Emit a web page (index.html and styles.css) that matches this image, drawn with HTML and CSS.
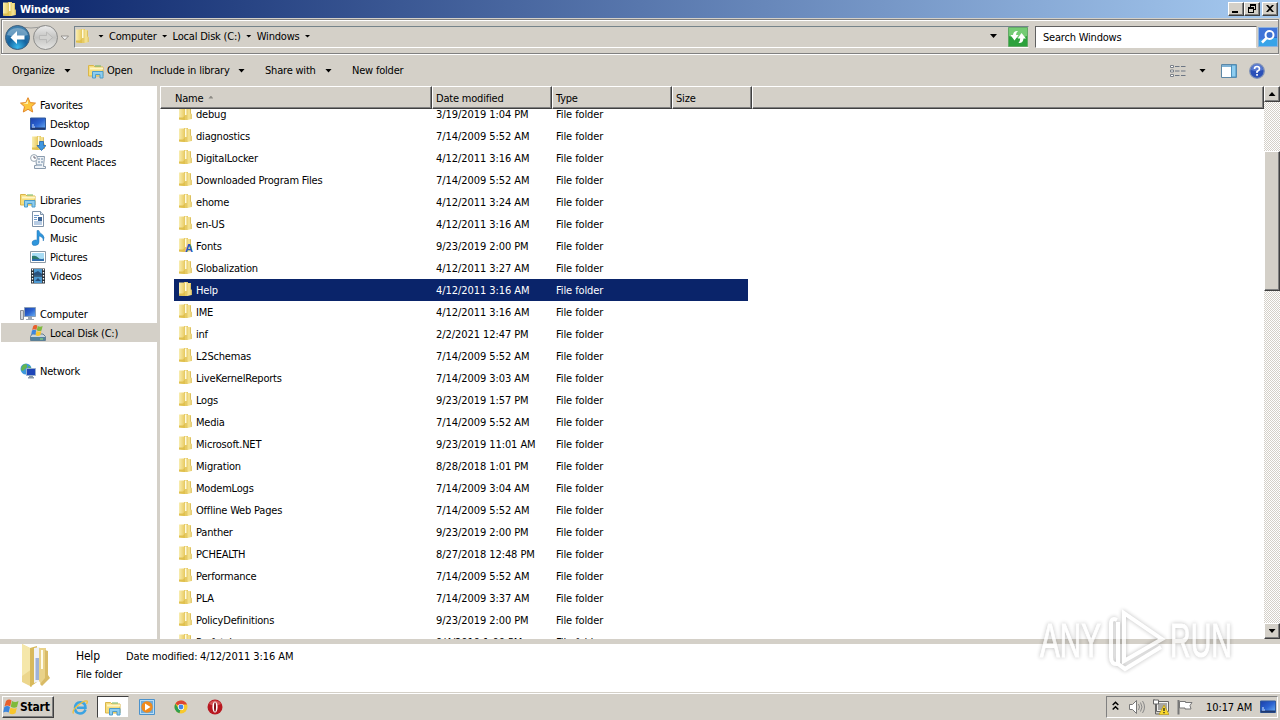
FILE: index.html
```html
<!DOCTYPE html>
<html lang="en">
<head>
    <meta charset="UTF-8">
    <meta name="viewport" content="width=device-width, initial-scale=1.0">
    <title>Windows</title>
    <link rel="stylesheet" href="styles.css">
</head>
<body>

<!-- Shared icons -->
<svg class="sprite" aria-hidden="true">
    <defs>
        <linearGradient id="gold" x1="0" x2="1" y1="0" y2="0">
            <stop offset="0" stop-color="#f8edb0"/>
            <stop offset="1" stop-color="#ecd06c"/>
        </linearGradient>
        <linearGradient id="screen" x1="0" x2="1" y1="0" y2="1">
            <stop offset="0" stop-color="#1c3fa8"/>
            <stop offset="0.5" stop-color="#2a62d0"/>
            <stop offset="1" stop-color="#6fb4f4"/>
        </linearGradient>
    </defs>
    <symbol id="folder" viewBox="0 0 16 16">
        <path d="M2 1.500h5V15l-5-.5z" fill="url(#gold)"/>
        <path d="M7 1h4v14H7z" fill="#e6cb66"/>
        <path d="M8 1.500h1.500V10H8z" fill="#fffbe0"/>
        <path d="M10.500 2H14v6l.7 1v5l-4.200 1z" fill="#f3e08e"/>
        <path d="M13.500 2.500v6l.7 1V14" fill="none" stroke="#dcc060"/>
        <path d="M2 12.500h4l2-2V15l-6-.5z" fill="#e0c04e"/>
    </symbol>
    <symbol id="library" viewBox="0 0 16 16">
        <path d="M0.5 2.500h5l1.500 1.500h8v9H.5z" fill="#f6dd7c" stroke="#dab64a"/>
        <path d="M2 5.500h13" stroke="#fff6c4" stroke-width="2"/>
        <path d="M7 3h6" stroke="#74b65a"/>
        <path d="M4.500 15V8.500h10.500V15h-3v-3.500H7.500V15z" fill="#8dcdf0" stroke="#4e9cc9"/>
    </symbol>
    <symbol id="monitor" viewBox="0 0 16 16">
        <path d="M0.500 2h15v11.500H.5z" fill="url(#screen)" stroke="#305a9c"/>
        <path d="M1 11.500h14v2H1z" fill="#20386e"/>
        <path d="M2 11h3M2 9h2" stroke="#cfe6ff"/>
    </symbol>
    <symbol id="flag" viewBox="0 0 16 16">
        <path d="M3 2q3-2.500 5.500-.5L7.200 7.300q-3-1.800-5.700 0z" fill="#e8602c"/>
        <path d="M9 2q3 2 6.500 0l-1.500 6q-3 1.800-6.300-.3z" fill="#7fba3c"/>
        <path d="M1.300 8q3-2 5.700 0l-1.300 5.500q-2.700-1.700-5.500 0z" fill="#3c86dc"/>
        <path d="M7.500 8.500q3 2 6.300.2l-1.300 5.500q-3.500 2-6.300 0z" fill="#f8c62c"/>
    </symbol>
</svg>

<div class="window">
    <div class="title-bar">
        <svg class="icon title-icon"><use href="#folder"/></svg>
        <span class="title">Windows</span>
        <div class="btn3d win-btn"><svg viewBox="0 0 12 10"><path d="M2 7h6v2H2z"/></svg></div>
        <div class="btn3d win-btn"><svg viewBox="0 0 12 10"><path d="M4 0h6v6H8V5h1V2H5v1H4zM2 3h6v6H2zm1 2v3h4V5z" fill-rule="evenodd"/></svg></div>
        <div class="btn3d win-btn close"><svg viewBox="0 0 12 10"><path d="M2 1h2l2 2 2-2h2L7 4.500 10 8H8L6 6 4 8H2l3-3.500z"/></svg></div>
    </div>

    <div class="address-bar">
        <svg class="nav-buttons" viewBox="0 0 70 28">
            <defs>
                <radialGradient id="back" cx=".5" cy=".9" r=".8">
                    <stop offset="0" stop-color="#39b8ec"/>
                    <stop offset=".5" stop-color="#14639f"/>
                    <stop offset="1" stop-color="#3d7fae"/>
                </radialGradient>
                <linearGradient id="fwd" x1="0" x2="0" y1="0" y2="1">
                    <stop offset="0" stop-color="#ececec"/>
                    <stop offset=".5" stop-color="#c4c4c2"/>
                    <stop offset="1" stop-color="#e6e6e4"/>
                </linearGradient>
            </defs>
            <path d="M16 2.500q14 5 28 0" fill="none" stroke="#9a9a98"/>
            <circle cx="16.500" cy="14.500" r="12" fill="url(#back)" stroke="#41607c"/>
            <path d="M6 12a11 10 0 0 1 21 0q-10 3-21 0z" fill="#fff" opacity=".3"/>
            <path d="M9.500 14.500 16 8v4.500h7.500v4H16V21z" fill="#fff"/>
            <circle cx="44.500" cy="14.500" r="12" fill="url(#fwd)" stroke="#8c8c8a"/>
            <path d="M51.500 14.500 45.500 9v3.500h-7v4h7V20z" fill="#d2d2d0" stroke="#b4b4b2" stroke-width=".8"/>
            <path d="M60 13h7.500l-3.700 4z" fill="#eee" stroke="#85837e" stroke-width=".8"/>
        </svg>
        <div class="address">
            <svg class="icon"><use href="#folder"/></svg>
            <i class="down small first"></i><span class="crumb">Computer</span>
            <i class="down small"></i><span class="crumb">Local Disk (C:)</span>
            <i class="down small"></i><span class="crumb">Windows</span>
            <i class="down small"></i>
            <i class="down last"></i>
        </div>
        <svg class="refresh" viewBox="0 0 20 20">
            <path d="M.5.5h19v19H.5z" fill="#2ca23c" stroke="#63a866"/>
            <path d="M1 1h18v8q-9 4-18 0z" fill="#74cb74"/>
            <path d="M10 4Q5.500 3.500 5 8H2.500l4 5.500 4-5.500H8q0-2.500 2-4z" fill="#fff"/>
            <path d="M10.500 16q4.500.5 5-4.500H18l-4.500-5.500-3.800 5.500h2.500q0 2.500-1.700 4.500z" fill="#fff"/>
        </svg>
        <div class="search">Search Windows</div>
        <svg class="search-btn" viewBox="0 0 20 20">
            <path d="M.5.5h19v19H.5z" fill="#2468cc" stroke="#8db2de"/>
            <path d="M1 11h18v8H1z" fill="#38a4e8"/>
            <path d="M1 1h18v9L1 13z" fill="#3f74d8"/>
            <circle cx="11.500" cy="8" r="4" fill="#3c70d0" stroke="#fff" stroke-width="2"/>
            <path d="M8.500 11 4 15.500" stroke="#fff" stroke-width="2.500"/>
        </svg>
    </div>

    <div class="toolbar">
        <span class="t-organize">Organize</span><i class="down"></i>
        <svg class="icon open-icon"><use href="#library"/></svg>
        <span class="t-open">Open</span>
        <span class="t-include">Include in library</span><i class="down"></i>
        <span class="t-share">Share with</span><i class="down"></i>
        <span class="t-new">New folder</span>
        <div class="views">
            <svg width="16" height="14" viewBox="0 0 16 14">
                <path d="M.5 1.500h3v2h-3zM.5 6h3v2h-3zM.5 10.500h3v2h-3z" fill="#fff" stroke="#7a8088"/>
                <path d="M5 2.500h4.500M11 2.500h4.500M5 7h4.500M11 7h4.500M5 11.500h4.500M11 11.500h4.500" stroke="#6c7684"/>
            </svg>
            <i class="down"></i>
            <svg width="16" height="14" viewBox="0 0 16 14">
                <path d="M.5.5h15v13H.5z" fill="#fff" stroke="#5c87a6"/>
                <path d="M1 2h9" stroke="#7eb2d6" stroke-width="2"/>
                <path d="M10.500 1h4.500v12h-4.500z" fill="#8ecdf0" stroke="#4d91bd"/>
            </svg>
            <svg class="help" width="16" height="16" viewBox="0 0 16 16">
                <circle cx="8" cy="8" r="7.300" fill="#2b50b8" stroke="#8093b8" stroke-width="1.300"/>
                <path d="M2 7a6 6 0 0 1 12 0q-6 2-12 0z" fill="#7493e0" opacity=".6"/>
                <path d="M5.500 6q0-2.500 2.500-2.500T10.500 6Q10.500 7.200 8 8.500V10" fill="none" stroke="#fff" stroke-width="1.600"/>
                <path d="M7.200 11h1.700v1.700H7.200z" fill="#fff"/>
            </svg>
        </div>
    </div>

    <div class="main">
        <div class="sidebar">
            <div class="nav-item">
                <svg class="icon" viewBox="0 0 16 16"><path d="M8 .7l2.200 4.900 5.300.5-4 3.600 1.200 5.300L8 12.300 3.300 15l1.200-5.300-4-3.600 5.300-.5z" fill="#fcc63c" stroke="#e2872a"/><path d="M8 3v4L3 7l3-1z" fill="#fff2b0"/></svg>
                <span>Favorites</span>
            </div>
            <div class="nav-item sub"><svg class="icon"><use href="#monitor"/></svg><span>Desktop</span></div>
            <div class="nav-item sub">
                <svg class="icon" viewBox="0 0 16 16"><use href="#folder" width="16" height="16"/><path d="M9.500 6.500h4v4H16l-4.500 5-4.500-5h2.500z" fill="#3f97e0" stroke="#2464ac" stroke-width=".8"/></svg>
                <span>Downloads</span>
            </div>
            <div class="nav-item sub">
                <svg class="icon" viewBox="0 0 16 16"><path d="M5.500 2.500h9l-1 10h2v2h-11v-3h2z" fill="#eef2f6" stroke="#8a9bad"/><path d="M8 5h2M11 5h2M8 8h2M11 8h2M7 11h5" stroke="#6a87a4"/><circle cx="4" cy="4" r="3.400" fill="#fff" stroke="#98a6b2"/><path d="M4 2v2h2" fill="none" stroke="#667"/></svg>
                <span>Recent Places</span>
            </div>

            <div class="nav-item group"><svg class="icon"><use href="#library"/></svg><span>Libraries</span></div>
            <div class="nav-item sub">
                <svg class="icon" viewBox="0 0 16 16"><path d="M2.500.5h8l3 3v12h-11z" fill="#fff" stroke="#7f92a8"/><path d="M10.500.5v3h3" fill="#d8e4f0" stroke="#7f92a8"/><path d="M4 4.500h5M4 6.500h3M4 8.500h3M4 11h8M4 13h8" stroke="#6f98c8"/><path d="M8 6h4v4H8z" fill="#3c6496"/></svg>
                <span>Documents</span>
            </div>
            <div class="nav-item sub">
                <svg class="icon" viewBox="0 0 16 16"><path d="M7 .5h1.800q.5 2.500 3.500 4 3 2.500 1 6.500.3-3-2-4Q10 6.200 9 6v6q0 3-3.500 3.500T2 13q0-2.500 3-3 1-.2 2 .2z" fill="#2f96dc" stroke="#2373b4" stroke-width=".5"/></svg>
                <span>Music</span>
            </div>
            <div class="nav-item sub">
                <svg class="icon" viewBox="0 0 16 16"><path d="M.5 2.500h15v11H.5z" fill="#fff" stroke="#8d9aa6"/><path d="M2 4h12v8H2z" fill="#a8dcf4"/><path d="M2 7q4-1 6 1.500t6 1V12H2z" fill="#2c7a6c"/><path d="M2 10h12v2H2z" fill="#2f6cac"/></svg>
                <span>Pictures</span>
            </div>
            <div class="nav-item sub">
                <svg class="icon" viewBox="0 0 16 16"><path d="M1 .5h14v15H1z" fill="#283038"/><path d="M4 1h8v6.500H4zM4 8.500h8V15H4z" fill="#4c98d0"/><path d="M4 5l4-2 4 3v1.500H4zM5 13l3-3 3 3z" fill="#28507c"/><path d="M2.500 1v14M13.500 1v14" stroke="#fff" stroke-width="1.300" stroke-dasharray="1.500 1.500"/></svg>
                <span>Videos</span>
            </div>

            <div class="nav-item group">
                <svg class="icon" viewBox="0 0 16 16"><path d="M.5 4.500h3v9h-3z" fill="#d0d4da" stroke="#888e98"/><path d="M4.500 1.500h11v9h-11z" fill="url(#screen)" stroke="#8ba0b8"/><path d="M8 11h4v2h2v1H6v-1h2z" fill="#9aa6b4"/></svg>
                <span>Computer</span>
            </div>
            <div class="nav-item sub selected">
                <svg class="icon" viewBox="0 0 16 16"><path d="M2 9h11l2.500 2.500v4H.5v-4z" fill="#c8d4dc" stroke="#667e90"/><path d="M1 12h14v3.500H1z" fill="#54829c"/><path d="M10 14h3" stroke="#8eec70"/><use href="#flag" x="1" y="-1" width="12" height="13"/></svg>
                <span>Local Disk (C:)</span>
            </div>
            <div class="nav-item group">
                <svg class="icon" viewBox="0 0 16 16"><circle cx="6" cy="6" r="5.500" fill="#3c98dc"/><path d="M3 2q3-2 4 0T5 6q-2 3-4 1 0-3 2-5zM8 3q2 0 3 2L9 7z" fill="#63b550"/><path d="M6.500 5.500h9v7h-9z" fill="#1e46b8" stroke="#9ab0cc"/><path d="M9 13h4v1h1v1.500H8V14h1z" fill="#8898a8"/></svg>
                <span>Network</span>
            </div>
        </div>

        <div class="files">
            <div class="file-header">
                <div class="col name">Name <i class="sort"></i></div>
                <div class="col date">Date modified</div>
                <div class="col type">Type</div>
                <div class="col size">Size</div>
                <div class="col rest"></div>
            </div>
            <div class="file-list" id="file-list"></div>
        </div>

        <div class="scrollbar">
            <div class="btn3d scroll-btn"><i class="up"></i></div>
            <div class="btn3d thumb"></div>
            <div class="btn3d scroll-btn bottom"><i class="down"></i></div>
        </div>
    </div>

    <div class="details">
        <svg class="big-folder" viewBox="0 0 36 46">
            <path d="M3 1 13 6v38L3 39z" fill="#ecd68c"/>
            <path d="M3 1 13 6v20L3 33z" fill="#f5e7aa"/>
            <path d="M11 5l7-2v36l-7 5z" fill="#d8b95c"/>
            <path d="M15 5l6-1v34l-6 2z" fill="#f0f2f6"/>
            <path d="M16.500 15H20v22h-3.500z" fill="#9fb2d8"/>
            <path d="M20 5h7v33l-5 3-2-3z" fill="#e9d28a"/>
            <path d="M22 7h2v19h-2z" fill="#fffceb"/>
            <path d="M26 7l3 1v24l2 3-8 8-2-2 5-6z" fill="#d9bb66"/>
        </svg>
        <div class="details-text">
            <div class="line"><span class="d-name">Help</span><span class="d-label">Date modified:</span><span class="d-date">4/12/2011 3:16 AM</span></div>
            <div class="line"><span>File folder</span></div>
        </div>
    </div>

    <div class="taskbar">
        <div class="btn3d start"><svg class="icon"><use href="#flag"/></svg><span>Start</span></div>
        <svg class="icon task-ie" viewBox="0 0 16 16">
            <path d="M13.500 10.500Q12 14.500 8 14.500 3 14 3 8.700 3.500 3.500 8.300 3.300q5.200.3 5.200 5.500H5" fill="none" stroke="#3ba3e2" stroke-width="2.500"/>
            <path d="M1.500 14.500q-2-3 5-8.500 6-5 8.500-4 .8.800-.500 3" fill="none" stroke="#efc03c" stroke-width="1.300"/>
        </svg>
        <div class="task-active"><svg class="icon"><use href="#library"/></svg></div>
        <svg class="icon" viewBox="0 0 16 16">
            <path d="M.5.5h15v15H.5z" fill="#b8dcf4" stroke="#4b92cc"/>
            <path d="M2 2h12v12H2z" fill="#6cabdd"/>
            <circle cx="8" cy="8" r="5.700" fill="#f08a1c"/>
            <path d="M6 4.500 11.500 8 6 11.500z" fill="#fff"/>
        </svg>
        <svg class="icon task-chrome" viewBox="0 0 16 16">
            <circle cx="8" cy="8" r="6.500" fill="#f8c92c"/>
            <path d="M8 8 2.400 4.700A6.500 6.500 0 0 1 14 5.500H8z" fill="#dc4435"/>
            <path d="M8 8 6.500 14.300A6.500 6.500 0 0 1 2.400 4.700L5.500 9.500z" fill="#2f9e50"/>
            <circle cx="8" cy="8" r="3.100" fill="#fff"/>
            <circle cx="8" cy="8" r="2.400" fill="#4285e8"/>
        </svg>
        <svg class="icon" viewBox="0 0 16 16">
            <circle cx="8" cy="8" r="7.500" fill="#b81820"/>
            <path d="M2 5a7 7 0 0 1 12 0q-6 3-12 0z" fill="#e06c6c" opacity=".7"/>
            <ellipse cx="8" cy="8" rx="2.600" ry="5.500" fill="#fff"/>
            <ellipse cx="8" cy="8" rx="1" ry="4.800" fill="#801016"/>
        </svg>
        <div class="tray">
            <svg class="chevron" width="7" height="10" viewBox="0 0 7 10"><path d="M.7 4 3.500 1.200 6.300 4M.7 8.500 3.500 5.700 6.300 8.500" fill="none" stroke="#000" stroke-width="1.500"/></svg>
            <svg class="icon speaker" viewBox="0 0 16 16"><path d="M.5 5.500h3l4-4v13l-4-4h-3z" fill="#fff" stroke="#777"/><path d="M9.500 5q2 3 0 6M11.500 3.500q3 4.500 0 9M13.500 2q4 6 0 12" fill="none" stroke="#888"/></svg>
            <svg class="icon network" viewBox="0 0 16 16"><path d="M3.500 2.500h12v10h-12z" fill="#f2f2f0" stroke="#666"/><path d="M5 4h9v7H5z" fill="#a6a6a4"/><path d="M1 0v3l1.500 2v10h4" fill="none" stroke="#666"/><path d="M.5 1h5v4h-5z" fill="#fff" stroke="#666"/><path d="M11 6l5 9.500H6z" fill="#f9d82c" stroke="#b49518" stroke-width=".7"/><path d="M11 9v3M11 13v1.200" stroke="#222" stroke-width="1.300"/></svg>
            <svg class="icon action" viewBox="0 0 16 16"><path d="M1.500 1v14.500" stroke="#777" stroke-width="2"/><path d="M2.500 2.500h6v1h6.500l-2 3 1 3.500H8V9H2.500z" fill="#fff" stroke="#777"/></svg>
            <span class="clock">10:17 AM</span>
            <svg class="icon"><use href="#monitor"/></svg>
        </div>
    </div>

    <svg class="watermark" viewBox="0 0 200 70">
        <g fill="#fff" stroke="#fff" stroke-width="1">
            <text x="4" y="51" textLength="61" lengthAdjust="spacingAndGlyphs">ANY</text>
            <text x="134" y="51" textLength="62" lengthAdjust="spacingAndGlyphs">RUN</text>
        </g>
        <g fill="none" stroke="#fff" stroke-width="4">
            <path d="M88 7v48l38-22z"/>
            <path d="M81 14q-6-3-6 4v33q0 8 7 7M82 16v42l7 5 36-22"/>
        </g>
    </svg>
</div>

<script>
    const files = [
        ['debug', '3/19/2019 1:04 PM'],
        ['diagnostics', '7/14/2009 5:52 AM'],
        ['DigitalLocker', '4/12/2011 3:16 AM'],
        ['Downloaded Program Files', '7/14/2009 5:52 AM'],
        ['ehome', '4/12/2011 3:24 AM'],
        ['en-US', '4/12/2011 3:16 AM'],
        ['Fonts', '9/23/2019 2:00 PM'],
        ['Globalization', '4/12/2011 3:27 AM'],
        ['Help', '4/12/2011 3:16 AM'],
        ['IME', '4/12/2011 3:16 AM'],
        ['inf', '2/2/2021 12:47 PM'],
        ['L2Schemas', '7/14/2009 5:52 AM'],
        ['LiveKernelReports', '7/14/2009 3:03 AM'],
        ['Logs', '9/23/2019 1:57 PM'],
        ['Media', '7/14/2009 5:52 AM'],
        ['Microsoft.NET', '9/23/2019 11:01 AM'],
        ['Migration', '8/28/2018 1:01 PM'],
        ['ModemLogs', '7/14/2009 3:04 AM'],
        ['Offline Web Pages', '7/14/2009 5:52 AM'],
        ['Panther', '9/23/2019 2:00 PM'],
        ['PCHEALTH', '8/27/2018 12:48 PM'],
        ['Performance', '7/14/2009 5:52 AM'],
        ['PLA', '7/14/2009 3:37 AM'],
        ['PolicyDefinitions', '9/23/2019 2:00 PM'],
        ['Prefetch', '9/4/2019 1:00 PM']
    ];

    let html = '';
    files.forEach(([name, date]) => {
        const badge = name === 'Fonts' ? '<b class="font-badge">A</b>' : '';
        html += `
            <div class="row${name === 'Help' ? ' selected' : ''}">
                <div class="cell-name"><svg class="icon"><use href="#folder"/></svg>${badge}<span>${name}</span></div>
                <div class="cell-date">${date}</div>
                <div class="cell-type">File folder</div>
            </div>
        `;
    });
    document.getElementById('file-list').innerHTML = html;
</script>

</body>
</html>
```

FILE: styles.css
```css
* {
    box-sizing: border-box;
}
body {
    margin: 0;
    font-family: "DejaVu Sans Condensed", "DejaVu Sans", sans-serif;
    font-stretch: condensed;
    font-size: 11px;
    letter-spacing: -0.2px;
    color: #000;
    white-space: nowrap;
    overflow: hidden;
}
.sprite {
    position: absolute;
    width: 0;
    height: 0;
}
.icon {
    width: 16px;
    height: 16px;
    flex: none;
}
.window {
    position: relative;
    width: 1280px;
    height: 720px;
    display: flex;
    flex-direction: column;
    background: #d4d0c8;
}
.btn3d {
    background: #d4d0c8;
    border: 1px solid;
    border-color: #fff #404040 #404040 #fff;
    box-shadow: inset -1px -1px 0 #808080;
}

/* arrows */
.down,
.up {
    flex: none;
    width: 7px;
    height: 4px;
    background: #000;
    clip-path: polygon(0 0, 100% 0, 50% 100%);
}
.up {
    clip-path: polygon(50% 0, 100% 100%, 0 100%);
}
.down.small {
    width: 6px;
    height: 3px;
}

/* title bar */
.title-bar {
    height: 18px;
    flex: none;
    display: flex;
    align-items: center;
    padding-right: 2px;
    background: linear-gradient(90deg, #0a246a, #a6caf0);
}
.title-icon {
    margin: 0 3px 0 1px;
}
.title {
    flex: 1;
    color: #fff;
    font-weight: bold;
    letter-spacing: -0.1px;
}
.win-btn {
    width: 16px;
    height: 14px;
}
.win-btn svg {
    display: block;
    width: 12px;
    height: 10px;
    margin: 1px 0 0 1px;
}
.win-btn.close {
    margin-left: 2px;
}

/* address bar */
.address-bar {
    height: 35px;
    flex: none;
    display: flex;
    align-items: flex-start;
    margin: 1px 1px 0;
    padding-top: 6px;
    border: 1px solid #808080;
    box-shadow: inset 1px 1px 0 #fff, 0 1px 0 #fff;
}
.nav-buttons {
    width: 70px;
    height: 28px;
    margin: -3px 0 0 -1px;
}
.address {
    width: 955px;
    height: 22px;
    display: flex;
    align-items: center;
    margin-left: 3px;
    padding-bottom: 2px;
    border: 1px solid;
    border-color: #75838a #d4d0c8 #fff #75838a;
}
.address .icon {
    margin-left: -1px;
}
.down.small.first {
    margin-left: 8px;
}
.crumb {
    margin: 0 5px;
}
.down.last {
    margin-left: auto;
    margin-right: 31px;
}
.refresh {
    width: 20px;
    height: 20px;
    margin: 1px 0 0 -21px;
}
.search {
    width: 222px;
    height: 22px;
    margin-left: 7px;
    padding-left: 7px;
    line-height: 21px;
    background: #fff;
    border: 1px solid;
    border-color: #606060 #d4d0c8 #fff #606060;
}
.search-btn {
    width: 20px;
    height: 20px;
    margin: 1px 0 0 1px;
}

/* toolbar */
.toolbar {
    height: 31px;
    flex: none;
    display: flex;
    align-items: center;
    padding-left: 12px;
    margin-top: 1px;
}
.toolbar .down {
    margin-left: 8px;
}
.t-organize {
    width: 44px;
}
.open-icon {
    margin: 0 3px 0 17px;
}
.t-open {
    width: 43px;
}
.t-include {
    width: 80px;
}
.t-share {
    width: 52px;
    margin-left: 20px;
}
.t-new {
    margin-left: 20px;
}
.views {
    display: flex;
    align-items: center;
    margin-left: auto;
    padding-right: 15px;
}
.toolbar .views .down {
    margin: 0 15px 0 13px;
}
.help {
    margin-left: 12px;
}

/* main area */
.main {
    height: 553px;
    flex: none;
    display: flex;
}
.sidebar {
    width: 157px;
    padding-top: 9px;
    background: #fff;
    margin-right: 3px;
}
.nav-item {
    height: 19px;
    display: flex;
    align-items: center;
    gap: 4px;
    padding-left: 20px;
}
.nav-item span {
    padding-top: 2px;
}
.nav-item.sub {
    padding-left: 30px;
}
.nav-item.group {
    margin-top: 19px;
}
.nav-item.selected {
    margin-left: 1px;
    padding-left: 29px;
    background: #d4d0c8;
}
.files {
    width: 1104px;
    display: flex;
    flex-direction: column;
    background: #fff;
}
.file-header {
    height: 23px;
    flex: none;
    display: flex;
}
.col {
    display: flex;
    align-items: center;
    padding: 2px 0 0 4px;
    background: #d4d0c8;
    border: 1px solid;
    border-color: #fff #404040 #404040 #fff;
    box-shadow: inset -1px -1px 0 #808080;
}
.col.name {
    width: 272px;
    padding-left: 14px;
}
.sort {
    width: 5px;
    height: 3px;
    margin: -3px 0 0 5px;
    background: #8c8a84;
    clip-path: polygon(50% 0, 100% 100%, 0 100%);
}
.col.date,
.col.type {
    width: 120px;
    padding-left: 3px;
}
.col.size {
    width: 80px;
    padding-left: 3px;
}
.col.rest {
    flex: 1;
}
.file-list {
    height: 530px;
    overflow: hidden;
}
.row {
    width: 574px;
    height: 22px;
    display: flex;
    align-items: center;
    margin-left: 14px;
}
.row:first-child {
    margin-top: -6px;
}
.row.selected {
    background: #0a246a;
    color: #fff;
}
.cell-name {
    position: relative;
    width: 262px;
    display: flex;
    align-items: center;
    gap: 3px;
    padding-left: 3px;
}
.cell-name .icon {
    margin-top: -2px;
}
.font-badge {
    position: absolute;
    left: 11px;
    top: 3px;
    color: #2458c0;
    font: bold 11px "Liberation Sans", sans-serif;
}
.cell-date {
    width: 120px;
}
.cell-date,
.d-date {
    letter-spacing: -0.07px;
}
.cell-type {
    letter-spacing: -0.1px;
}

/* scrollbar */
.scrollbar {
    width: 16px;
    display: flex;
    flex-direction: column;
    background: repeating-conic-gradient(#fff 0 25%, #d4d0c8 0 50%) 0 0 / 2px 2px;
}
.scroll-btn {
    height: 16px;
    display: flex;
    align-items: center;
    justify-content: center;
}
.thumb {
    height: 140px;
    margin-top: 49px;
}
.scroll-btn.bottom {
    margin-top: auto;
}

/* details pane */
.details {
    height: 53px;
    flex: none;
    display: flex;
    border-top: 5px solid #d4d0c8;
    background: #fff;
}
.big-folder {
    width: 36px;
    height: 46px;
    margin: -1px 21px 0 19px;
}
.details-text {
    padding-top: 3px;
}
.line {
    height: 18px;
    display: flex;
    align-items: center;
}
.d-name {
    width: 50px;
    font-size: 12px;
}
.d-label {
    width: 74px;
    letter-spacing: -0.15px;
}

/* taskbar */
.taskbar {
    height: 27px;
    flex: none;
    display: flex;
    align-items: center;
    margin-top: 1px;
    padding: 0 2px;
    border-top: 1px solid #fff;
}
.start {
    width: 52px;
    height: 22px;
    display: flex;
    align-items: center;
    gap: 1px;
    font-size: 12px;
    font-weight: bold;
}
.task-ie {
    margin-left: 18px;
}
.task-active {
    width: 32px;
    height: 22px;
    margin: 0 10px 0 9px;
    padding: 3px 0 0 7px;
    background: #fff;
    border: 1px solid;
    border-color: #404040 #d4d0c8 #d4d0c8 #404040;
}
.task-chrome {
    margin: 0 18px;
}
.tray {
    width: 172px;
    height: 22px;
    display: flex;
    align-items: center;
    margin-left: auto;
    padding-left: 5px;
    border: 1px solid;
    border-color: #808080 #fff #fff #808080;
}
.chevron {
    margin-top: -3px;
}
.speaker {
    margin-left: 10px;
}
.network {
    margin-left: 8px;
}
.action {
    margin-left: 8px;
}
.clock {
    width: 46px;
    margin: 0 8px 0 13px;
    letter-spacing: -0.1px;
}

/* watermark lies over the list and the details pane */
.watermark {
    position: absolute;
    left: 1036px;
    top: 606px;
    width: 200px;
    height: 70px;
    font: 48px "Liberation Sans Narrow", "Liberation Sans", sans-serif;
    letter-spacing: 0;
    opacity: 0.75;
    filter: drop-shadow(0 0 2px rgba(0, 0, 0, 0.35));
}
```
